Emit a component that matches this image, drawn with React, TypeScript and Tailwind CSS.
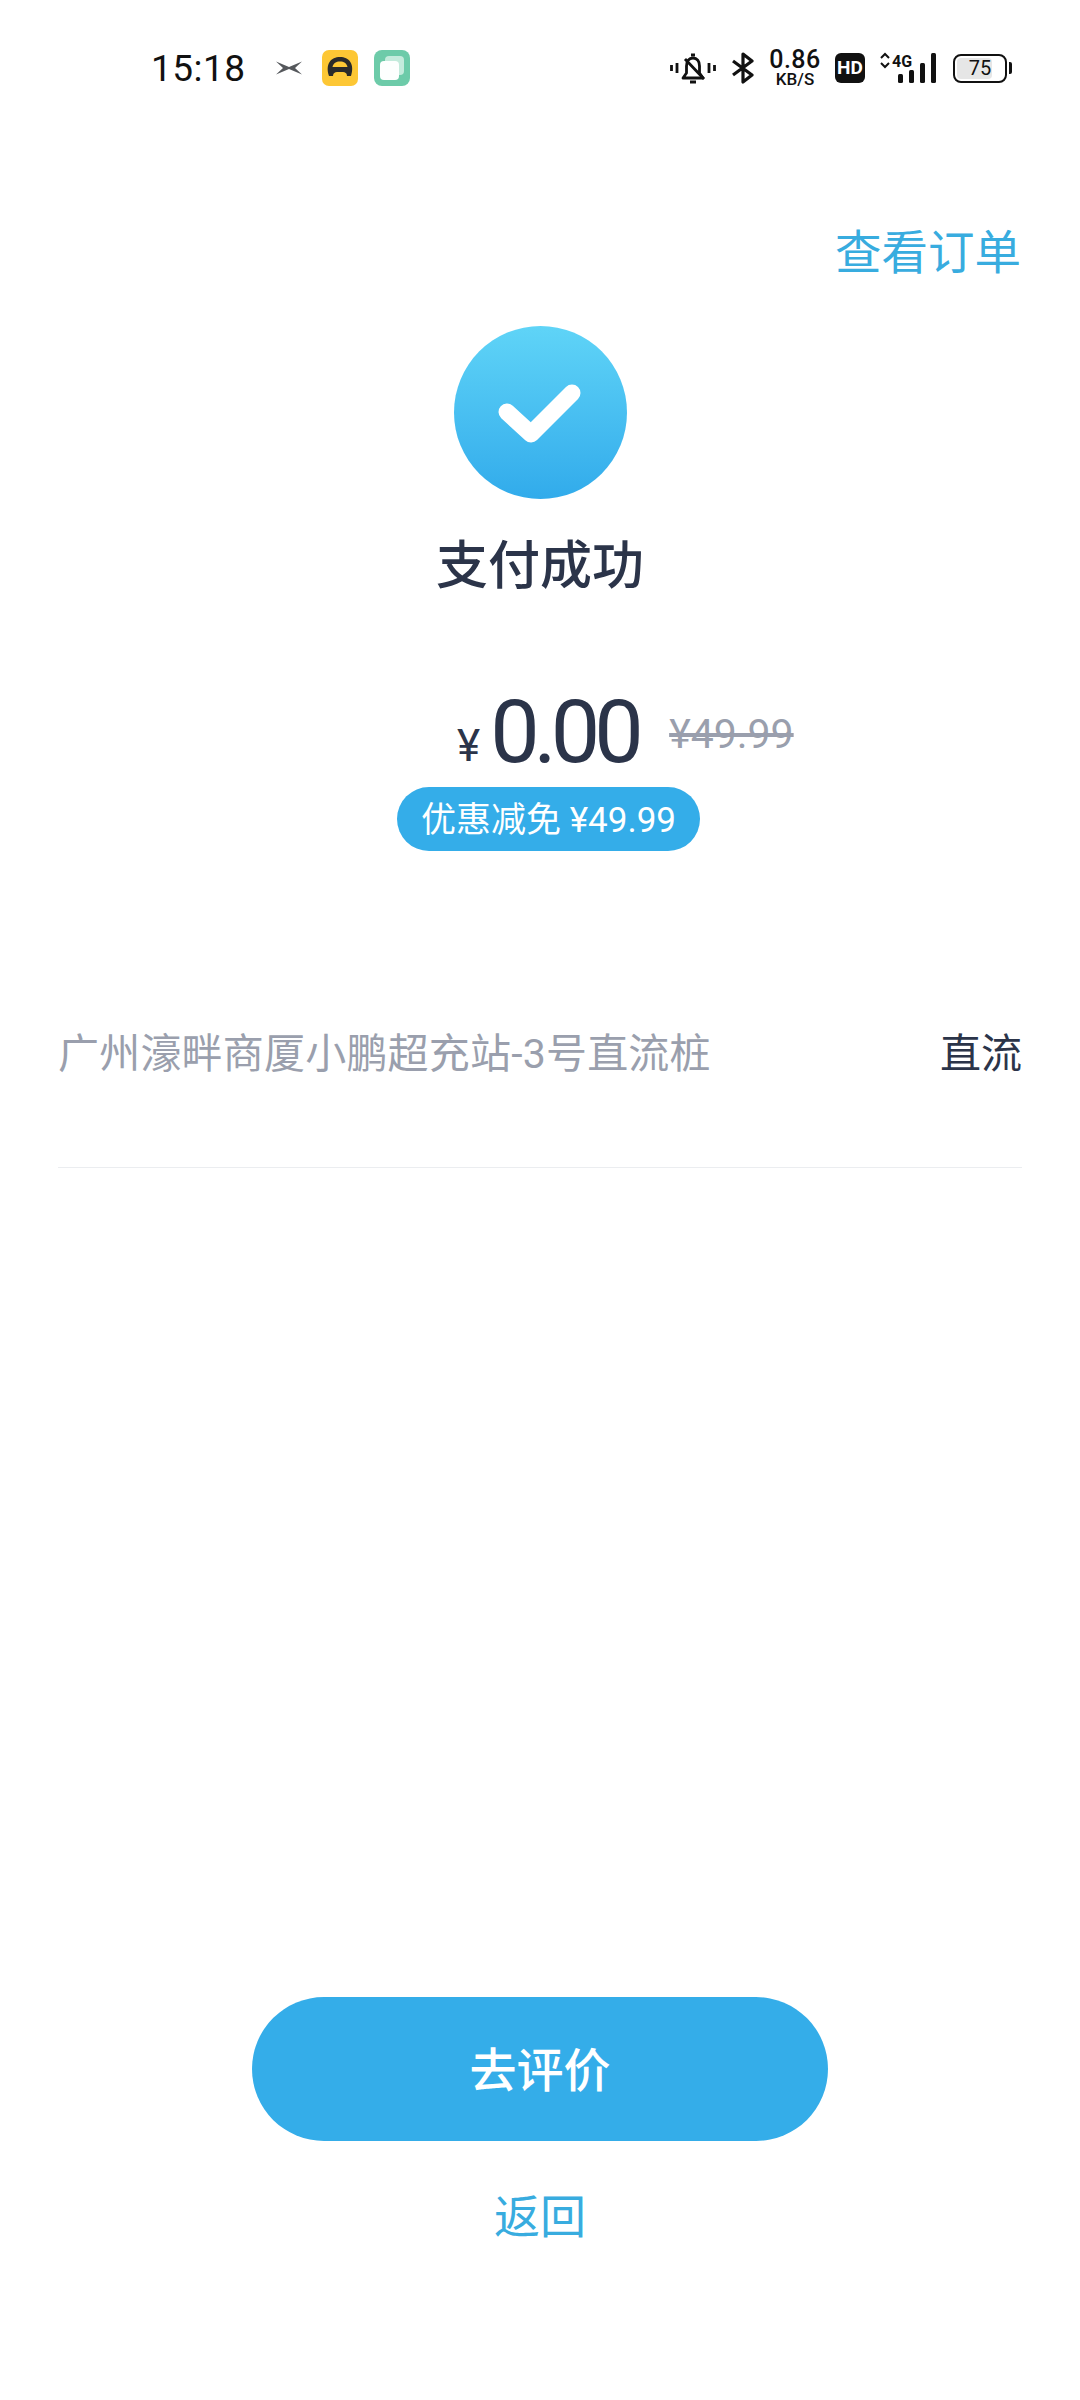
const cjk = "font-['Roboto','Noto_Sans_CJK_SC',sans-serif]";

function StatusLeft() {
  return (
    <div className="flex items-center">
      <span className="text-[37px] leading-none text-[#111] tracking-[0.5px] ml-[151px]">15:18</span>
      <svg className="ml-[29px]" width="28" height="16" viewBox="0 0 28 16">
        <path d="M1 1.5 L14 7 L27 1.5 L20 8 L27 14.5 L14 9 L1 14.5 L8 8 Z" fill="#55585c" />
      </svg>
      <svg className="ml-[19px]" width="36" height="36" viewBox="0 0 36 36">
        <rect width="36" height="36" rx="7" fill="#fdc735" />
        <path d="M7 26 C3 14 9 7 18 7 C27 7 33 14 29 26 L25 26 C25 23 23 22 21 22 L15 22 C13 22 11 23 11 26 Z M10.5 17 L25.5 17 C24.5 13 22 11.5 18 11.5 C14 11.5 11.5 13 10.5 17 Z" fill="#2a2a2a" fillRule="evenodd" />
      </svg>
      <svg className="ml-[16px]" width="36" height="36" viewBox="0 0 36 36">
        <rect width="36" height="36" rx="8" fill="#6dcba9" />
        <rect x="11" y="6" width="19" height="19" rx="4" fill="#c4ebdc" />
        <rect x="6" y="11" width="19" height="19" rx="4" fill="#fdfffe" />
      </svg>
    </div>
  );
}

function StatusRight() {
  return (
    <div className="flex items-center mr-[68px]">
      <svg width="46" height="36" viewBox="0 0 46 36" fill="none" stroke="#111" strokeWidth="2.8">
        <path d="M1.5 15 V21 M7 13 V23 M39 13 V23 M44.5 15 V21" />
        <path d="M13 28 H33 L29.5 23 V16 C29.5 11 27 8 23 8 C19 8 16.5 11 16.5 16 V23 Z" strokeLinejoin="round" />
        <path d="M21 5 H25 M20 32 H26 M15 9 L34 29" />
      </svg>
      <svg className="ml-[15px]" width="24" height="32" viewBox="0 0 24 32" fill="none" stroke="#111" strokeWidth="3.2">
        <path d="M2 9 L21 23 L12 30 V2 L21 9 L2 23" strokeLinejoin="round" />
      </svg>
      <div className="ml-[14px] flex flex-col items-center w-[52px] text-[#111] font-['Roboto',sans-serif]">
        <span className="text-[25px] leading-[22px] tracking-[0.5px] font-medium">0.86</span>
        <span className="text-[17px] leading-[16px] font-medium">KB/S</span>
      </div>
      <div className="ml-[14px] w-[30px] h-[30px] rounded-[6px] bg-[#111] text-white text-[19px] font-bold leading-[30px] text-center font-['Roboto',sans-serif]">HD</div>
      <svg className="ml-[15px]" width="56" height="32" viewBox="0 0 56 32">
        <path d="M1 6 L5 2 L9 6 M1 11 L5 15 L9 11" fill="none" stroke="#111" strokeWidth="2" />
        <rect x="18" y="22" width="5" height="9" rx="1.5" fill="#111" />
        <rect x="29" y="18" width="5" height="13" rx="1.5" fill="#111" />
        <rect x="40" y="11" width="5" height="20" rx="1.5" fill="#111" />
        <rect x="51" y="1" width="5" height="30" rx="1.5" fill="#111" />
        <text x="12" y="15" fontSize="16" fontWeight="700" fontFamily="Roboto" fill="#111">4G</text>
      </svg>
      <div className="ml-[17px] flex items-center">
        <div className="relative w-[54px] h-[29px] rounded-[8px] border-[2.5px] border-[#111] p-[2px]">
          <div className="absolute left-[2px] top-[2px] bottom-[2px] w-[35px] rounded-[4px] bg-[#e6e6e6]" />
          <span className="relative block text-center text-[20px] leading-[21px] text-[#111] font-['Roboto',sans-serif]">75</span>
        </div>
        <div className="ml-[2px] w-[3px] h-[12px] rounded-r-[2px] bg-[#111]" />
      </div>
    </div>
  );
}

export default function App() {
  return (
    <div className={`w-[1080px] h-[2400px] bg-white flex flex-col ${cjk}`}>
      <div className="h-[136px] flex items-center justify-between">
        <StatusLeft />
        <StatusRight />
      </div>

      <div className="flex justify-end pr-[59px] pt-[91px]">
        <span className="text-[46.5px] leading-[52px] text-[#38acdf]">查看订单</span>
      </div>

      <div className="flex flex-col items-center">
        <div className="mt-[47px] w-[173px] h-[173px] rounded-full bg-gradient-to-b from-[#5fd4f7] to-[#31abeb] flex items-center justify-center">
          <svg width="84" height="60" viewBox="0 0 84 60" fill="none">
            <path d="M9 29 L33 51 L74 10" stroke="#fff" strokeWidth="17" strokeLinecap="round" strokeLinejoin="round" />
          </svg>
        </div>
        <div className="mt-[38px] text-[52px] leading-[60px] font-medium text-[#2b3449]">支付成功</div>
      </div>

      <div className="pl-[457px] mt-[95px] flex items-end h-[80px]">
        <span className="text-[44px] leading-none text-[#2b3449] mb-[4px]">¥</span>
        <span className="ml-[10px] w-[147px] text-[88px] leading-[80px] tracking-[-6px] text-[#2b3449] font-['Roboto',sans-serif] whitespace-nowrap">0.00</span>
        <span className="ml-[32px] mb-[17px] text-[41px] leading-none text-[#9a9fad] line-through">¥49.99</span>
      </div>

      <div className="mt-[15px] ml-[397px] w-[303px] h-[64px] pt-[3px] rounded-full bg-[#34ade9] text-white text-[35px] leading-[61px] text-center">优惠减免 ¥49.99</div>

      <div className="mx-[58px] mt-[167px] h-[150px] border-b border-[#ebedf0] flex items-start justify-between pt-[11px]">
        <span className="text-[41px] leading-[50px] tracking-[0.2px] text-[#9a9fad]">广州濠畔商厦小鹏超充站-3号直流桩</span>
        <span className="text-[41px] leading-[50px] text-[#2b3449]">直流</span>
      </div>

      <div className="mt-auto flex flex-col items-center pb-[156px]">
        <div className="w-[576px] h-[144px] pt-[3px] rounded-full bg-[#34ade9] text-white text-[47px] font-medium leading-[141px] text-center">去评价</div>
        <div className="mt-[49px] text-[46px] leading-[54px] text-[#38acdf]">返回</div>
      </div>
    </div>
  );
}
